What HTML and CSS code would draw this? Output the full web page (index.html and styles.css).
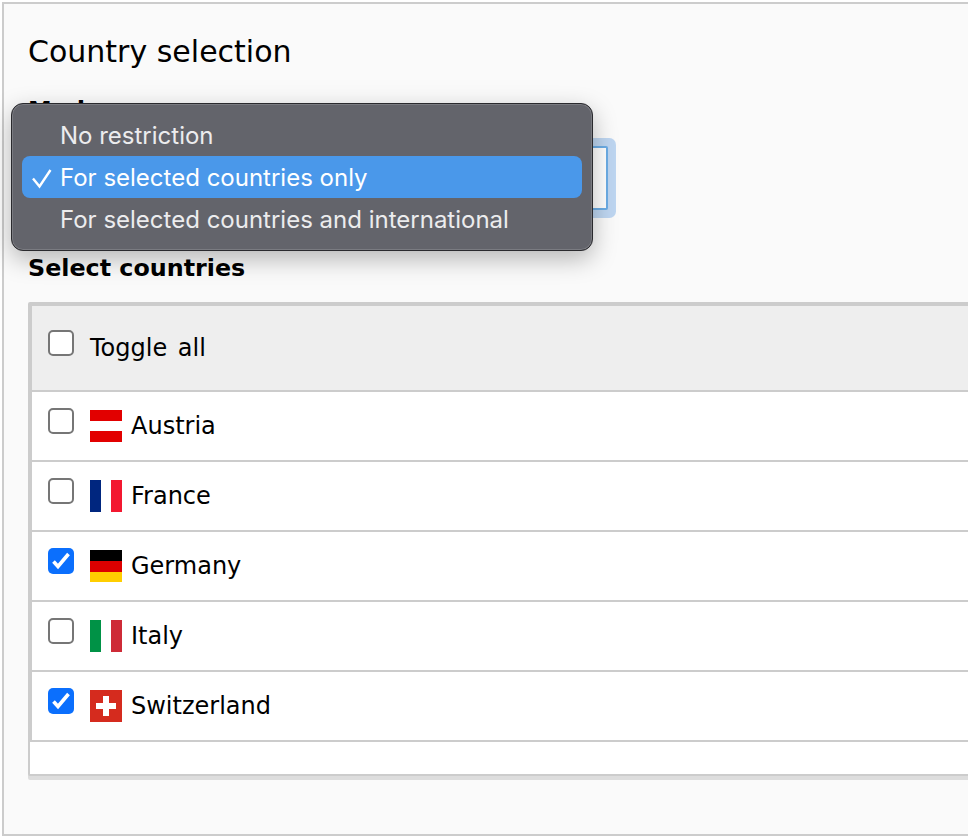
FILE: index.html
```html
<!DOCTYPE html>
<html lang="en">
<head>
  <meta charset="UTF-8">
  <title>Country selection</title>
  <link rel="stylesheet" href="styles.css">
</head>
<body>
  <div class="panel">
    <h2>Country selection</h2>
    <label class="field-label">Mode</label>
    <div class="select-box"></div>
    <label class="field-label countries-label">Select countries</label>
    <div class="table-wrap">
      <div class="table">
        <div class="row head">
          <span class="check"></span>
          <span class="name">Toggle all</span>
        </div>
        <div class="row">
          <span class="check"></span>
          <svg class="flag" viewBox="0 0 32 32"><rect width="32" height="32" fill="#fff"/><rect width="32" height="11" fill="#e20000"/><rect y="21" width="32" height="11" fill="#e20000"/></svg>
          <span class="name">Austria</span>
        </div>
        <div class="row">
          <span class="check"></span>
          <svg class="flag" viewBox="0 0 32 32"><rect width="32" height="32" fill="#fff"/><rect width="11" height="32" fill="#00267f"/><rect x="21" width="11" height="32" fill="#f31830"/></svg>
          <span class="name">France</span>
        </div>
        <div class="row">
          <span class="check on"><svg viewBox="0 0 26 26"><path d="M5.5 13.5l4.5 5L20.5 6" fill="none" stroke="#fff" stroke-width="3.6"/></svg></span>
          <svg class="flag" viewBox="0 0 32 32"><rect width="32" height="11" fill="#000"/><rect y="11" width="32" height="11" fill="#dd0000"/><rect y="22" width="32" height="10" fill="#ffce00"/></svg>
          <span class="name">Germany</span>
        </div>
        <div class="row">
          <span class="check"></span>
          <svg class="flag" viewBox="0 0 32 32"><rect width="32" height="32" fill="#fff"/><rect width="11" height="32" fill="#009246"/><rect x="21" width="11" height="32" fill="#ce2b37"/></svg>
          <span class="name">Italy</span>
        </div>
        <div class="row">
          <span class="check on"><svg viewBox="0 0 26 26"><path d="M5.5 13.5l4.5 5L20.5 6" fill="none" stroke="#fff" stroke-width="3.6"/></svg></span>
          <svg class="flag" viewBox="0 0 32 32"><rect width="32" height="32" fill="#d52b1e"/><rect x="13" y="6" width="6" height="20" fill="#fff"/><rect x="6" y="13" width="20" height="6" fill="#fff"/></svg>
          <span class="name">Switzerland</span>
        </div>
      </div>
    </div>

    <div class="popup">
      <div class="option">No restriction</div>
      <div class="option active">
        <svg class="tick" viewBox="0 0 20 20"><path d="M1 9.5L7.5 17.5 18.5 1" fill="none" stroke="#fff" stroke-width="2.4"/></svg>
        For selected countries only
      </div>
      <div class="option">For selected countries and international</div>
    </div>
  </div>
</body>
</html>
```
FILE: styles.css
```css
html, body {
  margin: 0;
  padding: 0;
  overflow: hidden;
  height: 100%;
  background: #fff;
}
body {
  font-family: 'DejaVu Sans', Verdana, sans-serif;
  color: #000;
}
.panel {
  position: relative;
  box-sizing: border-box;
  width: 1200px;
  height: 834px;
  margin: 2px 0 0 2px;
  padding: 30px 0 0 24px;
  background: #fafafa;
  border: 2px solid #ccc;
  border-right: 0;
}
h2 {
  margin: 0 0 24px 0;
  font-size: 30px;
  font-weight: 400;
  line-height: 36px;
}
.field-label {
  display: block;
  font-size: 23.8px;
  font-weight: 700;
  line-height: 32px;
}
.select-box {
  box-sizing: border-box;
  width: 580px;
  height: 64px;
  margin: 20px 0 42px 0;
  background: #fff;
  border: 2px solid #6cade6;
  border-radius: 2px;
  box-shadow: 0 0 0 8px rgba(108,164,228,0.42);
}
.countries-label {
  margin-bottom: 18px;
}
.table-wrap {
  width: 1100px;
  height: 474px;
  box-sizing: border-box;
  background: #fff;
  border: 2px solid #ccc;
  border-radius: 2px;
  box-shadow: 0 4px 0 #ddd;
}
.table {
  border-left: 2px solid #ccc;
  border-top: 2px solid #ccc;
}
.row {
  display: flex;
  align-items: flex-start;
  box-sizing: border-box;
  height: 70px;
  padding: 16px 0 0 16px;
  background: #fff;
  border-bottom: 2px solid #ccc;
  font-size: 24px;
}
.row.head {
  height: 86px;
  padding-top: 24px;
  background: #eee;
}
.check {
  box-sizing: border-box;
  flex: none;
  width: 26px;
  height: 26px;
  background: #fff;
  border: 2px solid #767676;
  border-radius: 5px;
}
.check.on {
  background: #0b6ffd;
  border: 0;
}
.check svg {
  display: block;
  width: 26px;
  height: 26px;
}
.flag {
  flex: none;
  width: 32px;
  height: 32px;
  margin: 2px 9px 0 16px;
}
.name {
  line-height: 34px;
  margin-top: 1px;
}
.head .name {
  margin-left: 16px;
  word-spacing: 3px;
}
.popup {
  position: absolute;
  left: 7px;
  top: 99px;
  box-sizing: border-box;
  width: 582px;
  height: 148px;
  padding: 10px;
  background: #63646b;
  border: 1px solid #2a2a2e;
  border-radius: 12px;
  box-shadow: inset 0 0 0 1px #7a7b81, 0 8px 24px rgba(0,0,0,0.28);
  font-family: Inter, 'Noto Sans', sans-serif;
  font-size: 24px;
  color: #ececee;
}
.option {
  position: relative;
  height: 42px;
  line-height: 44px;
  padding-left: 38px;
  border-radius: 8px;
}
.option.active {
  background: #4a98ea;
  color: #fff;
}
.tick {
  position: absolute;
  left: 10px;
  top: 13px;
  width: 20px;
  height: 20px;
}
```
